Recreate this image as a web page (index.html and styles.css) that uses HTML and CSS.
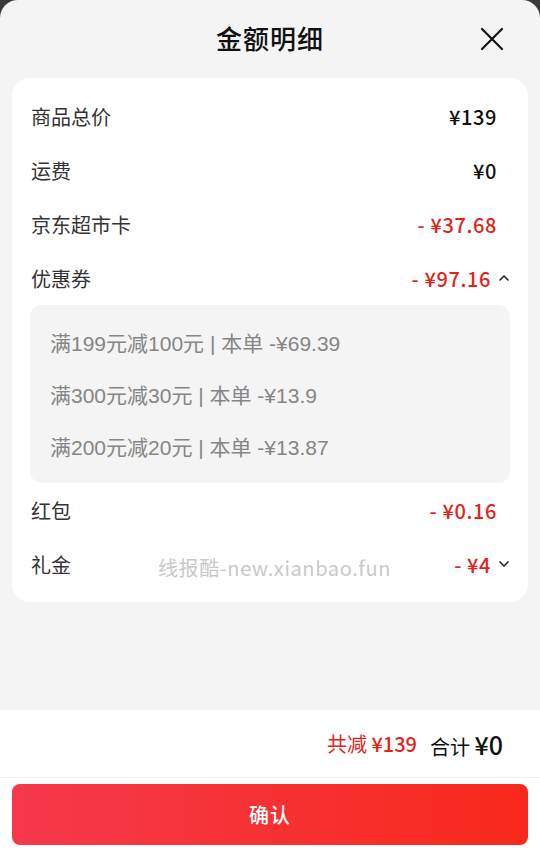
FILE: index.html
```html
<!DOCTYPE html>
<html lang="zh-CN">
<head>
  <meta charset="UTF-8">
  <meta name="viewport" content="width=device-width, initial-scale=1.0">
  <title>金额明细</title>
  <link rel="stylesheet" href="styles.css">
</head>
<body>
  <div class="sheet">
    <div class="header">
      <h1>金额明细</h1>
      <svg class="close" width="24" height="24" viewBox="0 0 24 24">
        <path d="M2 2 L22 22 M22 2 L2 22" stroke="#111" stroke-width="2.2" fill="none" stroke-linecap="round"/>
      </svg>
    </div>

    <div class="card">
      <div class="row">
        <span class="label">商品总价</span>
        <span class="value">¥139</span>
      </div>
      <div class="row">
        <span class="label">运费</span>
        <span class="value">¥0</span>
      </div>
      <div class="row">
        <span class="label">京东超市卡</span>
        <span class="value red">-&nbsp;¥37.68</span>
      </div>
      <div class="row">
        <span class="label">优惠券</span>
        <span class="value red with-arrow">-&nbsp;¥97.16
          <svg class="arrow" width="12" height="8" viewBox="0 0 12 8"><path d="M1.5 6.5 L6 2 L10.5 6.5" stroke="#222" stroke-width="1.5" fill="none"/></svg>
        </span>
      </div>
      <div class="coupons">
        <div class="coupon">满199元减100元 | 本单 -¥69.39</div>
        <div class="coupon">满300元减30元 | 本单 -¥13.9</div>
        <div class="coupon">满200元减20元 | 本单 -¥13.87</div>
      </div>
      <div class="row">
        <span class="label">红包</span>
        <span class="value red">-&nbsp;¥0.16</span>
      </div>
      <div class="row">
        <span class="label">礼金</span>
        <span class="value red with-arrow">-&nbsp;¥4
          <svg class="arrow" width="12" height="8" viewBox="0 0 12 8"><path d="M1.5 1.5 L6 6 L10.5 1.5" stroke="#222" stroke-width="1.5" fill="none"/></svg>
        </span>
      </div>
      <div class="watermark">线报酷-new.xianbao.fun</div>
    </div>

    <div class="spacer"></div>

    <div class="footer">
      <div class="summary">
        <span class="saved">共减 <b>¥139</b></span>
        <span class="total">合计 <b>¥0</b></span>
      </div>
      <div class="actions">
        <button class="confirm">确认</button>
      </div>
    </div>
  </div>
</body>
</html>
```

FILE: styles.css
```css
body {
  margin: 0;
  padding: 0;
  background-color: #3a3a3a;
  font-family: "Noto Sans CJK SC", "Noto Sans", sans-serif;
  color: #222;
}
.sheet {
  height: 857px;
  display: flex;
  flex-direction: column;
  background: #f4f4f4;
  border-radius: 18px 18px 0 0;
  overflow: hidden;
}
.header {
  height: 78px;
  box-sizing: border-box;
  padding-bottom: 4px;
  display: flex;
  align-items: center;
  justify-content: center;
  position: relative;
}
.header h1 {
  margin: 0;
  font-size: 26px;
  font-weight: 500;
  color: #111;
  letter-spacing: 1px;
}
.close {
  position: absolute;
  right: 36px;
  top: 27px;
}
.card {
  margin: 0 12px;
  background: #fff;
  border-radius: 18px;
  padding: 11px 18px 11px 18px;
  position: relative;
}
.row {
  height: 54px;
  display: flex;
  align-items: center;
  justify-content: space-between;
}
.label {
  font-size: 20px;
  color: #333;
  padding-left: 1px;
}
.value {
  font-size: 20px;
  font-weight: 500;
  color: #111;
  letter-spacing: 0.6px;
  padding-right: 13px;
  display: flex;
  align-items: center;
}
.value.red {
  color: #e3231b;
}
.value.with-arrow {
  padding-right: 0;
}
.arrow {
  margin-left: 7px;
}
.coupons {
  background: #f4f4f4;
  border-radius: 12px;
  padding: 11px 20px;
}
.coupon {
  height: 52px;
  display: flex;
  align-items: center;
  font-family: "Liberation Sans", "Noto Sans CJK SC", sans-serif;
  font-size: 21px;
  color: #858585;
}
.watermark {
  position: absolute;
  left: 146px;
  top: 475px;
  font-size: 20px;
  color: #c9c9c9;
  letter-spacing: 0.6px;
}
.spacer {
  flex: 1;
}
.footer {
  height: 147px;
  background: #fff;
}
.summary {
  height: 67px;
  border-bottom: 1px solid #f2f2f2;
  display: flex;
  align-items: center;
  justify-content: flex-end;
  padding-right: 37px;
  gap: 13px;
}
.saved {
  font-size: 20px;
  color: #e3231b;
}
.saved b {
  font-weight: 500;
}
.total {
  font-size: 20px;
  color: #111;
}
.total b {
  font-size: 25px;
  font-weight: 500;
}
.actions {
  padding: 6px 12px 0 12px;
}
.confirm {
  width: 100%;
  height: 61px;
  border: none;
  border-radius: 8px;
  background: linear-gradient(90deg, #f5394b, #f8291b);
  color: #fff;
  font-family: inherit;
  font-size: 20px;
  font-weight: 500;
  letter-spacing: 1px;
}
```
